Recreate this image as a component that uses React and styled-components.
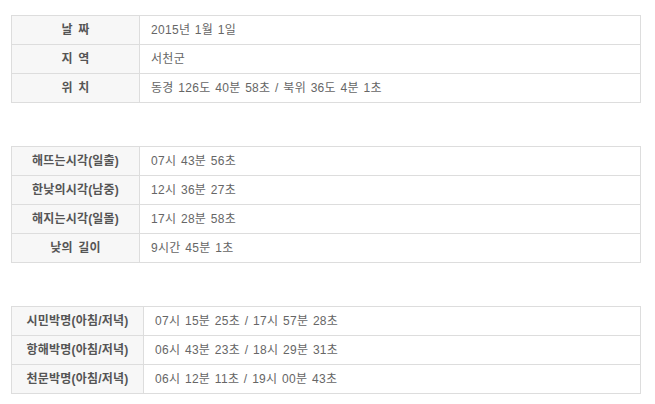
import React from 'react'
import styled, { createGlobalStyle } from 'styled-components'

const GlobalStyle = createGlobalStyle`
  html, body {
    margin: 0;
    padding: 0;
    background: #fff;
  }
  body {
    font-family: "Liberation Sans", "Noto Sans CJK KR", sans-serif;
    font-size: 12px;
    color: #666;
  }
`;

const Page = styled.div`
  padding: 15px 0 0 11px;
  display: flex;
  flex-direction: column;
  gap: 43px;
`;

const Table = styled.table`
  width: 630px;
  border-collapse: collapse;
  border: 1px solid #ddd;
  table-layout: fixed;
`;

const Label = styled.th`
  width: ${p => p.$width}px;
  height: 28px;
  padding: 0;
  background: #f7f7f7;
  border: 1px solid #ddd;
  color: #555;
  font-weight: bold;
  font-size: 12px;
  line-height: 16px;
  text-align: center;
  letter-spacing: 0.2px;
  word-spacing: 2px;
`;

const Value = styled.td`
  height: 28px;
  padding: 0 0 0 ${p => p.$pad}px;
  border: 1px solid #ddd;
  background: #fff;
  color: #666;
  line-height: 16px;
  text-align: left;
  letter-spacing: 0.3px;
  word-spacing: 1px;
`;

const InfoTable = ({ rows, labelWidth, pad }) => (
  <Table>
    <tbody>
      {rows.map(([k, v]) => (
        <tr key={k}>
          <Label $width={labelWidth}>{k}</Label>
          <Value $pad={pad}>{v}</Value>
        </tr>
      ))}
    </tbody>
  </Table>
);

const place = [
  ['날 짜', '2015년 1월 1일'],
  ['지 역', '서천군'],
  ['위 치', '동경 126도 40분 58초 / 북위 36도 4분 1초'],
];

const sun = [
  ['해뜨는시각(일출)', '07시 43분 56초'],
  ['한낮의시각(남중)', '12시 36분 27초'],
  ['해지는시각(일몰)', '17시 28분 58초'],
  ['낮의 길이', '9시간 45분 1초'],
];

const twilight = [
  ['시민박명(아침/저녁)', '07시 15분 25초 / 17시 57분 28초'],
  ['항해박명(아침/저녁)', '06시 43분 23초 / 18시 29분 31초'],
  ['천문박명(아침/저녁)', '06시 12분 11초 / 19시 00분 43초'],
];

export default function App() {
  return (
    <>
      <GlobalStyle />
      <Page>
        <InfoTable rows={place} labelWidth={127} pad={11} />
        <InfoTable rows={sun} labelWidth={127} pad={11} />
        <InfoTable rows={twilight} labelWidth={131} pad={11} />
      </Page>
    </>
  )
}
